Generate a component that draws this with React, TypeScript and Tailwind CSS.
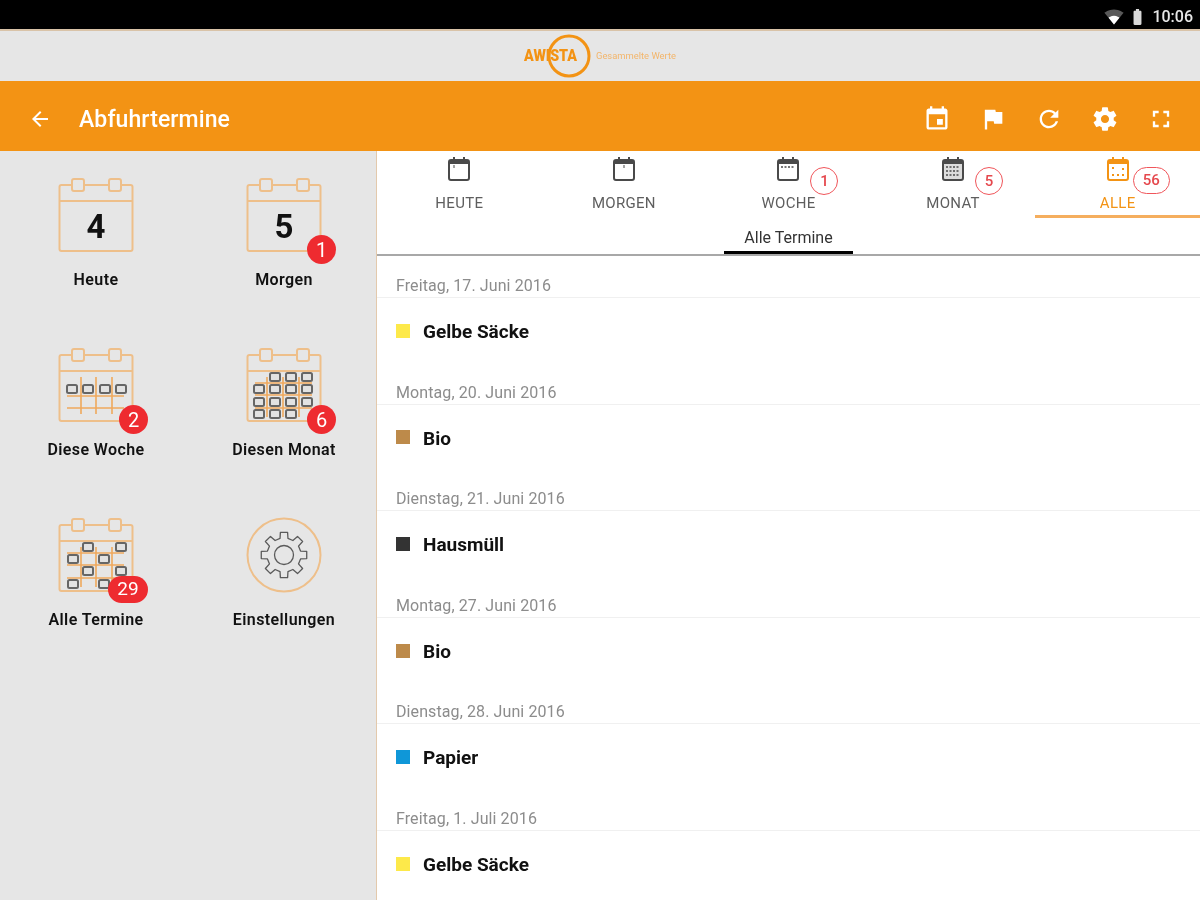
import React from "react";

const ORANGE = "#f39314";
const LINE = "#eebf8a";
const GRID = "#efa95c";
const P = {
  event: "M17 12h-5v5h5v-5zM16 1v2H8V1H6v2H5c-1.11 0-1.99.9-1.99 2L3 19c0 1.1.89 2 2 2h14c1.1 0 2-.9 2-2V5c0-1.1-.9-2-2-2h-1V1h-2zm3 18H5V8h14v11z",
  flag: "M14.4 6L14 4H5v17h2v-7h5.6l.4 2h7V6z",
  refresh: "M17.65 6.35C16.2 4.9 14.21 4 12 4c-4.42 0-7.99 3.58-7.99 8s3.57 8 7.99 8c3.73 0 6.84-2.55 7.73-6h-2.08c-.82 2.33-3.04 4-5.65 4-3.31 0-6-2.69-6-6s2.69-6 6-6c1.66 0 3.14.69 4.22 1.78L13 11h7V4l-2.35 2.35z",
  gear: "M19.43 12.98c.04-.32.07-.64.07-.98s-.03-.66-.07-.98l2.11-1.65c.19-.15.24-.42.12-.64l-2-3.46c-.12-.22-.39-.3-.61-.22l-2.49 1c-.52-.4-1.08-.73-1.69-.98l-.38-2.65C14.46 2.18 14.25 2 14 2h-4c-.25 0-.46.18-.49.42l-.38 2.65c-.61.25-1.17.59-1.69.98l-2.49-1c-.23-.09-.49 0-.61.22l-2 3.46c-.13.22-.07.49.12.64l2.11 1.65c-.04.32-.07.65-.07.98s.03.66.07.98l-2.11 1.65c-.19.15-.24.42-.12.64l2 3.46c.12.22.39.3.61.22l2.49-1c.52.4 1.08.73 1.69.98l.38 2.65c.03.24.24.42.49.42h4c.25 0 .46-.18.49-.42l.38-2.65c.61-.25 1.17-.59 1.69-.98l2.49 1c.23.09.49 0 .61-.22l2-3.46c.12-.22.07-.49-.12-.64l-2.11-1.65zM12 15.5c-1.93 0-3.5-1.57-3.5-3.5s1.57-3.5 3.5-3.5 3.5 1.57 3.5 3.5-1.57 3.5-3.5 3.5z",
  full: "M7 14H5v5h5v-2H7v-3zm-2-4h2V7h3V5H5v5zm12 7h-3v2h5v-5h-2v3zM14 5v2h3v3h2V5h-5z",
  back: "M20 11H7.83l5.59-5.59L12 4l-8 8 8 8 1.41-1.41L7.83 13H20v-2z",
};

function Mi({ d, size = 28 }: { d: string; size?: number }) {
  return (
    <svg width={size} height={size} viewBox="0 0 24 24" fill="#fff">
      <path d={d} />
    </svg>
  );
}

function gearPath(cx: number, cy: number, R: number, r: number, n: number) {
  const pts: string[] = [];
  const step = (Math.PI * 2) / n;
  for (let i = 0; i < n; i++) {
    const a = i * step - Math.PI / 2;
    const add = (rad: number, off: number) =>
      pts.push(`${(cx + rad * Math.cos(a + off * step)).toFixed(2)} ${(cy + rad * Math.sin(a + off * step)).toFixed(2)}`);
    add(r, -0.3);
    add(R, -0.2);
    add(R, 0.2);
    add(r, 0.3);
  }
  return "M" + pts.join("L") + "Z";
}

function Chips({ items }: { items: number[][] }) {
  return (
    <>
      {items.map(([x, y], i) => (
        <rect key={i} x={x - 5} y={y - 4} width={10} height={8} rx={1.5} fill="#e2e2e2" stroke="#666666" strokeWidth={2} />
      ))}
    </>
  );
}

function BigCal({ kind, digit }: { kind: string; digit?: string }) {
  const row = (y: number, xs: number[]) => xs.map((x) => [x, y]);
  return (
    <svg width={76} height={76} viewBox="0 0 76 76" fill="none">
      <rect x={1.5} y={8} width={73} height={66} rx={2} stroke={LINE} strokeWidth={2} />
      <line x1={1.5} y1={24} x2={74.5} y2={24} stroke={LINE} strokeWidth={2} />
      <rect x={14} y={2} width={12} height={12} rx={2} fill="#e6e6e6" stroke={LINE} strokeWidth={2} />
      <rect x={51} y={2} width={12} height={12} rx={2} fill="#e6e6e6" stroke={LINE} strokeWidth={2} />
      {digit && (
        <text x={38} y={61} textAnchor="middle" fontFamily="Roboto, sans-serif" fontWeight={700} fontSize={33} fill="#111">
          {digit}
        </text>
      )}
      {kind === "week" && (
        <g>
          <g stroke={GRID} strokeWidth={1.6}>
            <line x1={23} y1={30} x2={23} y2={67} />
            <line x1={38} y1={30} x2={38} y2={67} />
            <line x1={54} y1={30} x2={54} y2={67} />
            <line x1={9} y1={49} x2={66} y2={49} />
            <line x1={9} y1={61} x2={66} y2={61} />
          </g>
          <Chips items={row(42, [14, 30, 47, 63])} />
        </g>
      )}
      {kind === "month" && (
        <g>
          <g stroke={GRID} strokeWidth={1.6}>
            <line x1={21} y1={30} x2={21} y2={70} />
            <line x1={37} y1={30} x2={37} y2={70} />
            <line x1={53} y1={30} x2={53} y2={70} />
            <line x1={9} y1={36} x2={66} y2={36} />
            <line x1={9} y1={48} x2={66} y2={48} />
            <line x1={9} y1={61} x2={66} y2={61} />
          </g>
          <Chips items={[...row(30, [29, 45, 61]), ...row(42, [13, 29, 45, 61]), ...row(55, [13, 29, 45, 61]), ...row(67, [13, 29, 45])]} />
        </g>
      )}
      {kind === "all" && (
        <g>
          <g stroke={GRID} strokeWidth={1.6}>
            <line x1={23} y1={30} x2={23} y2={70} />
            <line x1={38} y1={30} x2={38} y2={70} />
            <line x1={54} y1={30} x2={54} y2={70} />
            <line x1={9} y1={36} x2={66} y2={36} />
            <line x1={9} y1={48} x2={66} y2={48} />
            <line x1={9} y1={61} x2={66} y2={61} />
          </g>
          <Chips items={[[30, 30], [63, 30], [15, 42], [46, 42], [30, 54], [63, 54], [15, 67], [46, 67]]} />
        </g>
      )}
    </svg>
  );
}

function GearCircle() {
  return (
    <svg width={76} height={76} viewBox="0 0 76 76" fill="none">
      <circle cx={38} cy={38} r={36.5} stroke={LINE} strokeWidth={2} />
      <path d={gearPath(38, 38, 23, 17, 8)} stroke="#5a5a5a" strokeWidth={1.3} strokeLinejoin="round" />
      <circle cx={38} cy={38} r={9.5} stroke="#5a5a5a" strokeWidth={1.3} />
    </svg>
  );
}

function TabIcon({ kind, color }: { kind: string; color: string }) {
  return (
    <svg width={24} height={26} viewBox="0 0 24 26" fill="none">
      <rect x={2} y={4} width={20} height={20} rx={2} stroke={color} strokeWidth={2} fill={kind === "month" ? "#dcdcdc" : "none"} />
      <line x1={2} y1={6.5} x2={22} y2={6.5} stroke={color} strokeWidth={3} />
      <line x1={7} y1={1} x2={7} y2={4} stroke={color} strokeWidth={2} />
      <line x1={17} y1={1} x2={17} y2={4} stroke={color} strokeWidth={2} />
      {kind === "day" && <line x1={7} y1={9} x2={7} y2={12} stroke={color} strokeWidth={1} />}
      {kind === "tomorrow" && <line x1={12} y1={9} x2={12} y2={12} stroke={color} strokeWidth={1} />}
      {kind === "week" && <line x1={5} y1={11} x2={19} y2={11} stroke={color} strokeWidth={1.4} strokeDasharray="2 1.5" />}
      {kind === "month" && (
        <g stroke={color} strokeWidth={1.4} strokeDasharray="2 1.5">
          <line x1={5} y1={11} x2={19} y2={11} />
          <line x1={5} y1={15} x2={19} y2={15} />
          <line x1={5} y1={19} x2={19} y2={19} />
        </g>
      )}
      {kind === "all" && (
        <g fill={color}>
          <rect x={6} y={11} width={2} height={2} />
          <rect x={16} y={12} width={2} height={2} />
          <rect x={6} y={18} width={2} height={2} />
          <rect x={11} y={18} width={2} height={2} />
          <rect x={16} y={18} width={2} height={2} />
        </g>
      )}
    </svg>
  );
}

const tiles = [
  { label: "Heute", kind: "plain", digit: "4" },
  { label: "Morgen", kind: "plain", digit: "5", badge: "1" },
  { label: "Diese Woche", kind: "week", badge: "2" },
  { label: "Diesen Monat", kind: "month", badge: "6" },
  { label: "Alle Termine", kind: "all", badge: "29" },
  { label: "Einstellungen", kind: "gear" },
];

const tabs = [
  { label: "HEUTE", kind: "day" },
  { label: "MORGEN", kind: "tomorrow" },
  { label: "WOCHE", kind: "week", badge: "1" },
  { label: "MONAT", kind: "month", badge: "5" },
  { label: "ALLE", kind: "all", badge: "56", active: true },
];

const entries = [
  { date: "Freitag, 17. Juni 2016", name: "Gelbe Säcke", color: "bg-[#fde94a]" },
  { date: "Montag, 20. Juni 2016", name: "Bio", color: "bg-[#bd8a4a]" },
  { date: "Dienstag, 21. Juni 2016", name: "Hausmüll", color: "bg-[#333333]" },
  { date: "Montag, 27. Juni 2016", name: "Bio", color: "bg-[#bd8a4a]" },
  { date: "Dienstag, 28. Juni 2016", name: "Papier", color: "bg-[#0f97d8]" },
  { date: "Freitag, 1. Juli 2016", name: "Gelbe Säcke", color: "bg-[#fde94a]" },
];

export default function App() {
  return (
    <div className="w-[1200px] h-[900px] overflow-hidden flex flex-col bg-white font-['Roboto',sans-serif] blur-[0.5px]">
      {/* Status bar */}
      <div className="h-[29px] shrink-0 bg-black flex items-center justify-end pr-[7px] pt-[4px]">
        <svg width={20} height={20} viewBox="0 0 24 24" fill="#fff">
          <path d="M12 21l11.5-14C23.1 6.7 18.65 3 12 3S.9 6.7.5 7L12 21z" fillOpacity={0.35} />
          <path d="M12 21l6.5-8c-.4-.3-2.9-2.4-6.5-2.4S5.9 12.7 5.5 13L12 21z" />
        </svg>
        <svg width={19} height={20} viewBox="0 0 24 24" fill="#fff" className="ml-[4px]">
          <path d="M15.67 4H14V2h-4v2H8.33C7.6 4 7 4.6 7 5.33v15.33C7 21.4 7.6 22 8.33 22h7.33c.74 0 1.34-.6 1.34-1.33V5.33C17 4.6 16.4 4 15.67 4z" fillOpacity={0.85} />
        </svg>
        <span className="ml-[5px] text-[16px] font-medium text-white/90 leading-none">10:06</span>
      </div>

      {/* Logo strip */}
      <div className="h-[52px] shrink-0 bg-[#e6e6e6] border-t-2 border-[#d9c3a8] flex items-center justify-center">
        <svg width={156} height={50} viewBox="0 0 156 50" fill="none" className="ml-[1px]">
          <circle cx={46} cy={25} r={20} stroke={ORANGE} strokeWidth={3} />
          <text x={1} y={30} fontFamily="Roboto, sans-serif" fontWeight={900} fontSize={16} fill={ORANGE} textLength={53} lengthAdjust="spacingAndGlyphs">
            AWISTA
          </text>
          <text x={73} y={28} fontFamily="Roboto, sans-serif" fontSize={9} fill="#f3b56a" textLength={80} lengthAdjust="spacingAndGlyphs">
            Gesammelte Werte
          </text>
        </svg>
      </div>

      {/* Toolbar */}
      <div className="h-[70px] shrink-0 bg-[#f39314] flex items-center pl-[28px] pr-[25px] pt-[6px]">
        <Mi d={P.back} size={24} />
        <span className="ml-[27px] pt-[3px] text-[23px] font-medium text-white tracking-[0.1px]">Abfuhrtermine</span>
        <div className="ml-auto flex items-center gap-[28px]">
          <Mi d={P.event} />
          <Mi d={P.flag} />
          <Mi d={P.refresh} />
          <Mi d={P.gear} />
          <Mi d={P.full} />
        </div>
      </div>

      <div className="flex-1 min-h-0 flex">
        {/* Left panel */}
        <div className="w-[377px] shrink-0 bg-[#e6e6e6] border-r border-[#e3c9ac] pl-[2px] pt-[26px]">
          <div className="grid grid-cols-[188px_188px] auto-rows-[170px]">
            {tiles.map((t) => (
              <div key={t.label} className="flex flex-col items-center">
                <div className="relative w-[76px] h-[76px]">
                  {t.kind === "gear" ? <GearCircle /> : <BigCal kind={t.kind} digit={t.digit} />}
                  {t.badge && (
                    <span
                      className={
                        t.badge.length > 1
                          ? "absolute left-[50px] top-[59px] w-[40px] h-[27px] rounded-full bg-[#ee2b30] text-white text-[19px] flex items-center justify-center"
                          : "absolute left-[61px] top-[58px] w-[29px] h-[29px] rounded-full bg-[#ee2b30] text-white text-[20px] flex items-center justify-center"
                      }
                    >
                      {t.badge}
                    </span>
                  )}
                </div>
                <span className="mt-[17px] text-[16px] leading-[20px] font-semibold text-[#111] tracking-[0.4px]">{t.label}</span>
              </div>
            ))}
          </div>
        </div>

        {/* Right panel */}
        <div className="flex-1 min-w-0 flex flex-col">
          <div className="grid grid-cols-5 h-[67px] shrink-0">
            {tabs.map((t) => (
              <div key={t.label} className={t.active ? "flex flex-col items-center border-b-[3px] border-[#f5ae5e]" : "flex flex-col items-center"}>
                <div className="relative mt-[5px] h-[26px]">
                  <TabIcon kind={t.kind} color={t.active ? "#f39314" : "#4a4a4a"} />
                  {t.badge && (
                    <span
                      className={
                        t.badge.length > 1
                          ? "absolute left-[27px] top-[11px] w-[37px] h-[27px] rounded-full border-[1.5px] border-[#f0555a] text-[#e5484d] text-[15px] font-medium flex items-center justify-center bg-white"
                          : "absolute left-[34px] top-[11px] w-[28px] h-[28px] rounded-full border-[1.5px] border-[#f0555a] text-[#e5484d] text-[15px] font-medium flex items-center justify-center bg-white"
                      }
                    >
                      {t.badge}
                    </span>
                  )}
                </div>
                <span className={t.active ? "mt-[13px] text-[15px] leading-[16px] tracking-[0.3px] text-[#f39314]" : "mt-[13px] text-[15px] leading-[16px] tracking-[0.3px] text-[#5e5e5e]"}>{t.label}</span>
              </div>
            ))}
          </div>
          <div className="h-[38px] shrink-0 flex justify-center border-b-2 border-[#a8a8a8]">
            <span className="w-[129px] h-[36px] border-b-[3px] border-black text-center text-[16px] leading-[40px] text-[#333]">Alle Termine</span>
          </div>
          <div className="flex-1 min-h-0 overflow-hidden">
            {entries.map((e, i) => (
              <div key={i}>
                <div className="h-[42px] flex items-end pb-[1px] pl-[19px] border-b border-[#f0f0f0] text-[16px] leading-[20px] text-[#8c8c8c] tracking-[0.1px]">{e.date}</div>
                <div className="h-[64.6px] flex items-center pl-[19px] pt-[1px]">
                  <span className={`w-[14px] h-[14px] ${e.color}`} />
                  <span className="ml-[13px] pt-[3px] text-[19px] font-bold text-[#111]">{e.name}</span>
                </div>
              </div>
            ))}
          </div>
        </div>
      </div>
    </div>
  );
}
